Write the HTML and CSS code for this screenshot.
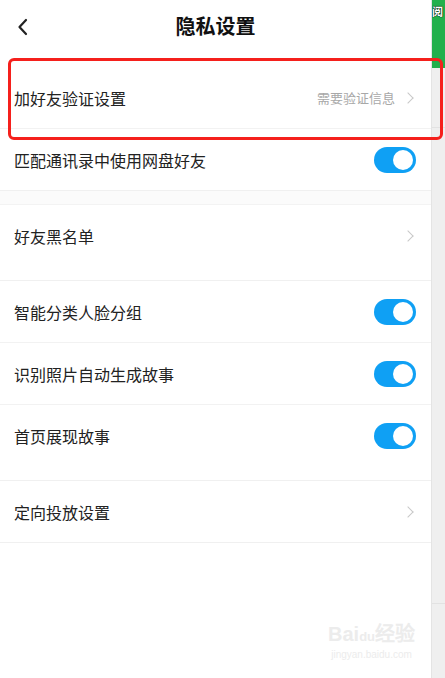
FILE: index.html
```html
<!DOCTYPE html>
<html lang="zh-CN">
<head>
  <meta charset="UTF-8" />
  <meta name="viewport" content="width=device-width, initial-scale=1.0"/>
  <title>隐私设置</title>
  <link rel="stylesheet" href="styles.css">
</head>
<body>

  <div class="screen">
    <div class="panel">
      <div class="header">
        <span class="back">
          <svg width="12" height="18" viewBox="0 0 12 18"><path d="M9 2 L2.5 9 L9 16" fill="none" stroke="#222" stroke-width="2.2" stroke-linecap="round" stroke-linejoin="round"/></svg>
        </span>
        <h1 class="title">隐私设置</h1>
      </div>

      <div class="group first">
        <div class="row">
          <span class="label">加好友验证设置</span>
          <span class="value">需要验证信息</span>
          <span class="arrow"></span>
        </div>
        <div class="row">
          <span class="label">匹配通讯录中使用网盘好友</span>
          <span class="switch on"></span>
        </div>
      </div>

      <div class="band"></div>

      <div class="group tail">
        <div class="row">
          <span class="label">好友黑名单</span>
          <span class="arrow"></span>
        </div>
      </div>

      <div class="group tail">
        <div class="row">
          <span class="label">智能分类人脸分组</span>
          <span class="switch on"></span>
        </div>
        <div class="row">
          <span class="label">识别照片自动生成故事</span>
          <span class="switch on"></span>
        </div>
        <div class="row">
          <span class="label">首页展现故事</span>
          <span class="switch on"></span>
        </div>
      </div>

      <div class="group">
        <div class="row">
          <span class="label">定向投放设置</span>
          <span class="arrow"></span>
        </div>
      </div>
    </div>

    <div class="strip">
      <div class="strip-top"><span class="strip-text">阅</span></div>
      <div class="strip-mid"></div>
      <div class="strip-low"></div>
    </div>
  </div>

  <!-- annotation + watermark over the shot -->
  <div class="mark"></div>
  <div class="watermark">
    <div class="wm-logo">Bai<span class="wm-du">du</span>经验</div>
    <div class="wm-url">jingyan.baidu.com</div>
  </div>

</body>
</html>
```

FILE: styles.css
```css
body {
  margin: 0;
  background-color: #fff;
  font-family: "Noto Sans CJK SC", "Noto Sans", sans-serif;
  color: #222;
}
.screen {
  display: flex;
  width: 445px;
  height: 678px;
  overflow: hidden;
}
.panel {
  width: 431px;
  flex: none;
  background-color: #fff;
}
.header {
  height: 50px;
  display: flex;
  align-items: center;
  justify-content: center;
  position: relative;
}
.back {
  position: absolute;
  left: 17px;
  top: 17px;
}
.title {
  margin: 0;
  font-size: 20px;
  font-weight: bold;
  color: #111;
}
.group.first {
  margin-top: 17px;
}
.row {
  height: 61px;
  display: flex;
  align-items: center;
  padding: 0 15px 0 14px;
  border-bottom: 1px solid #f2f2f2;
}
.group .row:last-child {
  border-bottom: none;
}
.group.tail .row:last-child {
  padding-bottom: 14px;
}
.group {
  border-bottom: 1px solid #f0f0f0;
}
.band {
  height: 13px;
  background-color: #fbfbfb;
  border-bottom: 1px solid #f3f3f3;
}
.label {
  flex: 1;
  font-size: 16px;
  color: #222;
}
.value {
  font-size: 13px;
  color: #a8a8a8;
  margin-right: 9px;
}
.arrow {
  width: 7px;
  height: 7px;
  border-top: 1.5px solid #c8c8c8;
  border-right: 1.5px solid #c8c8c8;
  transform: rotate(45deg);
  margin-right: 4px;
}
.switch {
  width: 42px;
  height: 26px;
  border-radius: 13px;
  background-color: #0fa0f4;
  position: relative;
}
.switch::after {
  content: "";
  position: absolute;
  right: 3px;
  top: 3px;
  width: 20px;
  height: 20px;
  border-radius: 50%;
  background-color: #fff;
}
.strip {
  width: 14px;
  flex: none;
  display: flex;
  flex-direction: column;
  background-color: #efefef;
  border-left: 1px solid #e4e4e4;
}
.strip-top {
  height: 68px;
  background-color: #22b04c;
  overflow: hidden;
}
.strip-text {
  display: block;
  color: #fff;
  font-size: 11px;
  font-weight: bold;
  line-height: 22px;
  text-shadow: 0 0 1px #000, 0 0 1px #000;
}
.strip-mid {
  height: 59px;
  border-bottom: 1px solid #e2e2e2;
}
.strip-low {
  height: 475px;
  border-bottom: 1px solid #e2e2e2;
}
.mark {
  position: absolute;
  left: 8px;
  top: 58px;
  width: 429px;
  height: 76px;
  border: 3px solid #f5201c;
  border-radius: 6px;
}
.watermark {
  position: absolute;
  left: 328px;
  top: 622px;
  color: #ececec;
  text-align: center;
}
.wm-logo {
  font-family: "Liberation Sans", sans-serif;
  font-size: 20px;
  font-weight: bold;
  line-height: 24px;
}
.wm-du {
  font-size: 13px;
}
.wm-url {
  font-family: "Liberation Sans", sans-serif;
  font-size: 10px;
}
```
